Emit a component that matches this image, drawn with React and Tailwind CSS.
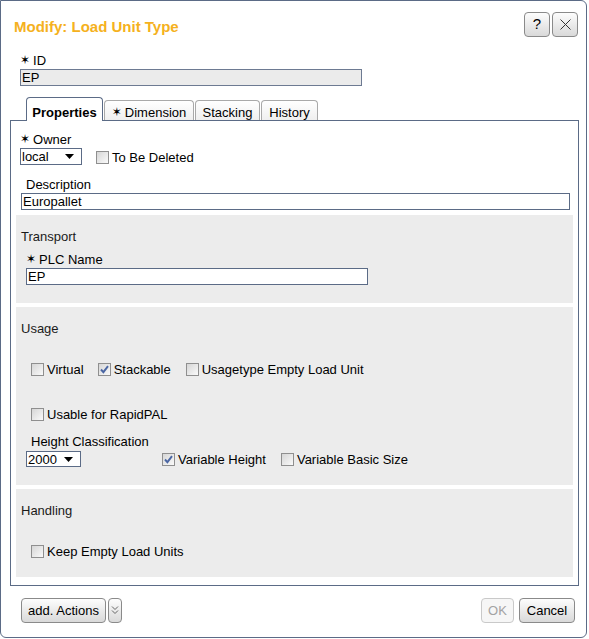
import React from 'react';

const Star = () => (
  <span className="text-[12px] leading-[15px] mr-[3px]" style={{ fontFamily: '"DejaVu Sans", sans-serif' }}>✶</span>
);

const Checkbox = ({ checked, label, className = '' }) => (
  <div className={`flex items-center h-[15px] ${className}`}>
    <div className="w-[13px] h-[13px] border border-[#8f8f8f] bg-linear-to-br from-[#d6d6d6] to-[#fafafa] flex items-center justify-center">
      {checked && (
        <svg width="11" height="11" viewBox="0 0 11 11">
          <path d="M2 5.5 L4.4 8.2 L9 2.2" fill="none" stroke="#4a66a3" strokeWidth="1.9" />
        </svg>
      )}
    </div>
    <span className="ml-[3px] leading-[15px]">{label}</span>
  </div>
);

const Select = ({ value, className = '' }) => (
  <div className={`flex items-center justify-between bg-white border border-[#5b6b86] pl-[1px] pr-[7px] ${className}`}>
    <span className="leading-[15px]">{value}</span>
    <svg width="9" height="5" viewBox="0 0 9 5">
      <path d="M0 0 L9 0 L4.5 5 Z" fill="#000" />
    </svg>
  </div>
);

const Button = ({ children, className = '', disabled }) => (
  <div
    className={`h-[25px] flex items-center justify-center rounded-[4px] border ${
      disabled
        ? 'border-[#c9c9c9] text-[#a3a3a3] bg-[#f6f6f6]'
        : 'border-[#8a8a8a] text-black bg-linear-to-b from-[#fdfdfd] to-[#d9d9d9]'
    } ${className}`}
  >
    {children}
  </div>
);

const Section = ({ title, className = '', children }) => (
  <div className={`ml-[5px] w-[557px] bg-[#ececec] ${className}`}>
    <div className="mt-[14px] ml-[5px] leading-[15px] text-[#1a1a1a]">{title}</div>
    {children}
  </div>
);

export default function App() {
  return (
    <div
      className="w-[587px] h-[638px] border border-[#5b6b86] rounded-tr-[6px] rounded-b-[6px] bg-white text-[13px] text-black flex flex-col"
      style={{ fontFamily: '"Liberation Sans", Arial, sans-serif' }}
    >
      {/* header */}
      <div className="flex justify-between items-start mt-[11px] h-[25px]">
        <div className="mt-[6px] ml-[13px] leading-[18px] text-[15px] font-bold text-[#f5b120]">
          Modify: Load Unit Type
        </div>
        <div className="flex gap-[2px] mr-[8px]">
          <Button className="w-[26px] text-[15px]">?</Button>
          <Button className="w-[26px]">
            <svg width="11" height="11" viewBox="0 0 11 11">
              <path d="M0.5 0.5 L10.5 10.5 M10.5 0.5 L0.5 10.5" stroke="#333" strokeWidth="1" />
            </svg>
          </Button>
        </div>
      </div>

      {/* ID */}
      <div className="mt-[16px] ml-[19px] leading-[15px] flex items-center"><Star />ID</div>
      <div className="mt-[1px] ml-[19px] w-[342px] h-[17px] bg-[#ebebeb] border border-[#6d7a92] pl-[1px] leading-[15px]">
        EP
      </div>

      {/* tabs */}
      <div className="mt-[11px] ml-[25px] h-[23px] flex items-end gap-[1px]">
        <div className="relative z-10 -mb-[1px] w-[77px] h-[24px] border border-b-0 border-[#5b6b86] rounded-t-[4px] bg-white pt-[7px] text-center font-bold leading-[15px]">
          Properties
        </div>
        <div className="w-[90px] h-[20px] border border-b-0 border-[#a9a9a9] rounded-t-[4px] bg-linear-to-b from-white to-[#efefef] pt-[4px] text-center leading-[15px] flex justify-center items-start">
          <Star />Dimension
        </div>
        <div className="w-[65px] h-[20px] border border-b-0 border-[#a9a9a9] rounded-t-[4px] bg-linear-to-b from-white to-[#efefef] pt-[4px] text-center leading-[15px]">
          Stacking
        </div>
        <div className="w-[57px] h-[20px] border border-b-0 border-[#a9a9a9] rounded-t-[4px] bg-linear-to-b from-white to-[#efefef] pt-[4px] text-center leading-[15px]">
          History
        </div>
      </div>

      {/* panel */}
      <div className="ml-[9px] w-[569px] h-[466px] border border-[#5b6b86] flex flex-col">
        <div className="mt-[11px] ml-[9px] leading-[15px] flex items-center"><Star />Owner</div>
        <div className="mt-[1px] ml-[9px] flex items-center h-[17px]">
          <Select value="local" className="w-[62px] h-[17px]" />
          <Checkbox label="To Be Deleted" className="ml-[14px] mt-[1px]" />
        </div>

        <div className="mt-[12px] ml-[15px] leading-[15px]">Description</div>
        <div className="mt-[1px] ml-[10px] w-[549px] h-[17px] border border-[#5b6b86] pl-[1px] leading-[15px]">
          Europallet
        </div>

        <Section title="Transport" className="mt-[5px] h-[88px]">
          <div className="mt-[8px] ml-[10px] leading-[15px] flex items-center"><Star />PLC Name</div>
          <div className="mt-[1px] ml-[10px] w-[342px] h-[17px] bg-white border border-[#5b6b86] pl-[1px] leading-[15px]">
            EP
          </div>
        </Section>

        <Section title="Usage" className="mt-[4px] h-[178px]">
          <div className="mt-[26px] ml-[15px] flex items-center">
            <Checkbox label="Virtual" />
            <Checkbox checked label="Stackable" className="ml-[14px]" />
            <Checkbox label="Usagetype Empty Load Unit" className="ml-[15px]" />
          </div>
          <div className="mt-[30px] ml-[15px] flex">
            <Checkbox label="Usable for RapidPAL" />
          </div>
          <div className="mt-[12px] ml-[15px] leading-[15px]">Height Classification</div>
          <div className="mt-[2px] ml-[10px] flex items-center h-[16px]">
            <Select value="2000" className="w-[55px] h-[16px]" />
            <Checkbox checked label="Variable Height" className="ml-[81px]" />
            <Checkbox label="Variable Basic Size" className="ml-[15px]" />
          </div>
        </Section>

        <Section title="Handling" className="mt-[4px] h-[88px]">
          <div className="mt-[26px] ml-[15px] flex">
            <Checkbox label="Keep Empty Load Units" />
          </div>
        </Section>
      </div>

      {/* footer */}
      <div className="mt-[12px] pl-[20px] pr-[11px] flex justify-between">
        <div className="flex gap-[2px]">
          <Button className="w-[85px]">add. Actions</Button>
          <Button className="w-[14px]">
            <svg width="8" height="11" viewBox="0 0 8 11">
              <path d="M1 1.5 L4 4.5 L7 1.5 M1 5.5 L4 8.5 L7 5.5" fill="none" stroke="#666" strokeWidth="1" />
            </svg>
          </Button>
        </div>
        <div className="flex gap-[5px]">
          <Button disabled className="w-[33px]">OK</Button>
          <Button className="w-[56px]">Cancel</Button>
        </div>
      </div>
    </div>
  );
}
